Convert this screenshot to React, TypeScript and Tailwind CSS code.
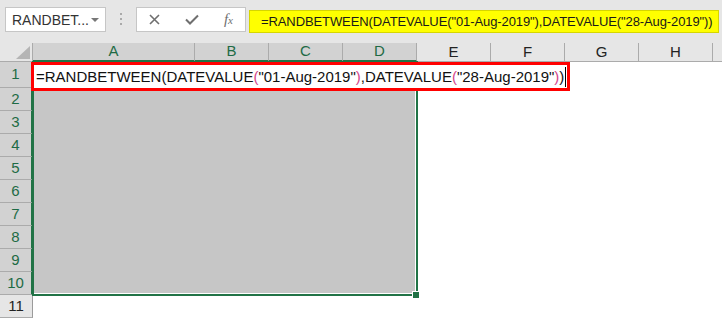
import React from "react";

const cols = [
  { name: "A", w: 162, sel: true },
  { name: "B", w: 74, sel: true },
  { name: "C", w: 74, sel: true },
  { name: "D", w: 74, sel: true },
  { name: "E", w: 74, sel: false },
  { name: "F", w: 74, sel: false },
  { name: "G", w: 74, sel: false },
  { name: "H", w: 74, sel: false },
  { name: "", w: 40, sel: false },
];

const rows = [
  { n: 1, h: 26 },
  { n: 2, h: 23 },
  { n: 3, h: 23 },
  { n: 4, h: 23 },
  { n: 5, h: 23 },
  { n: 6, h: 23 },
  { n: 7, h: 23 },
  { n: 8, h: 23 },
  { n: 9, h: 23 },
  { n: 10, h: 23 },
  { n: 11, h: 23 },
];

function P({ c }: { c: string }) {
  return <span className="text-[#d4458a]">{c}</span>;
}

export default function App() {
  return (
    <div
      className="w-[722px] h-[318px] overflow-hidden bg-white text-black"
      style={{ fontFamily: '"Liberation Sans", Arial, sans-serif' }}
    >
      {/* formula bar strip */}
      <div className="h-[43px] bg-[#e6e6e6] flex items-start">
        <div className="ml-[5px] mt-[7px] w-[101px] h-[25px] bg-white border border-[#c6c6c6] flex items-center pl-[6px] pr-[6px]">
          <span className="text-[14px] text-[#333] flex-1 leading-none">RANDBET...</span>
          <span className="w-0 h-0 border-l-[4px] border-r-[4px] border-t-[4px] border-l-transparent border-r-transparent border-t-[#777]" />
        </div>
        <div className="ml-[14px] mt-[13px] flex flex-col gap-[3px]">
          <span className="w-[2px] h-[2px] bg-[#aaa]" />
          <span className="w-[2px] h-[2px] bg-[#aaa]" />
          <span className="w-[2px] h-[2px] bg-[#aaa]" />
        </div>
        <div className="ml-[14px] mt-[7px] w-[110px] h-[25px] bg-white border border-[#c6c6c6] flex items-center justify-between px-[12px]">
          <svg width="11" height="11" viewBox="0 0 11 11">
            <path d="M1 1L10 10M10 1L1 10" stroke="#6f6f6f" strokeWidth="1.6" />
          </svg>
          <svg width="14" height="11" viewBox="0 0 14 11">
            <path d="M1 5.5L5 9.5L13 1.5" stroke="#6f6f6f" strokeWidth="2" fill="none" />
          </svg>
          <span
            className="text-[15px] italic text-[#6f6f6f] leading-none"
            style={{ fontFamily: '"Liberation Serif", serif' }}
          >
            f<span className="text-[11px]">x</span>
          </span>
        </div>
        <div className="ml-[3px] mt-[10px] w-[470px] h-[23px] bg-[#ffff00] border border-[#d6d600] flex items-center pl-[11px] overflow-hidden">
          <span className="text-[13px] tracking-[-0.1px] leading-none whitespace-nowrap text-[#1a1a1a]">
            =RANDBETWEEN(DATEVALUE("01-Aug-2019"),DATEVALUE("28-Aug-2019"))
          </span>
        </div>
      </div>

      {/* column headers */}
      <div className="flex h-[19px]">
        <div className="w-[33px] shrink-0 bg-[#e6e6e6] border-r border-b border-[#ababab] flex items-end justify-end pr-[2px] pb-[2px]">
          <svg width="14" height="13" viewBox="0 0 14 13">
            <path d="M14 0L14 13L0 13Z" fill="#b5b5b5" />
          </svg>
        </div>
        {cols.map((c, i) => (
          <div
            key={i}
            style={{ width: c.w }}
            className={`shrink-0 border-r border-[#ababab] flex items-center justify-center text-[15px] ${
              c.sel
                ? "bg-[#d2d2d2] text-[#1e6b45] border-b-2 border-b-[#217346]"
                : "bg-[#e6e6e6] text-[#222] border-b border-b-[#ababab]"
            }`}
          >
            {c.name}
          </div>
        ))}
      </div>

      {/* body */}
      <div className="flex">
        <div className="w-[33px] shrink-0 flex flex-col">
          {rows.map((r) => (
            <div
              key={r.n}
              style={{ height: r.h }}
              className={`border-b border-[#ababab] flex items-center justify-center text-[15px] ${
                r.n <= 10
                  ? "bg-[#d2d2d2] text-[#1e6b45] border-r-2 border-r-[#217346]"
                  : "bg-[#e6e6e6] text-[#222] border-r border-r-[#9b9b9b]"
              }`}
            >
              {r.n}
            </div>
          ))}
        </div>

        <div className="relative flex-1 h-[256px]">
          {/* selection A1:D10 */}
          <div className="absolute left-[-1px] top-[-1px] w-[386px] h-[235px] border-2 border-[#217346] bg-white pr-px pb-px">
            <div className="w-full h-full bg-[#c6c6c6]" />
          </div>
          <div className="absolute left-[380px] top-[230px] w-[6px] h-[6px] bg-[#217346] outline outline-1 outline-white" />

          {/* editing cell A1 */}
          <div className="absolute left-[-2px] top-0 w-[539px] h-[29px] border-[3px] border-[#ff0000] bg-white flex items-center pl-[2px]">
            <span className="text-[15px] leading-none whitespace-nowrap text-[#111]">
              =RANDBETWEEN(DATEVALUE<P c="(" />"01-Aug-2019"<P c=")" />,DATEVALUE<P c="(" />"28-Aug-2019"<P c=")" />)
            </span>
            <span className="ml-[1px] w-px h-[20px] bg-black" />
          </div>
        </div>
      </div>
    </div>
  );
}
